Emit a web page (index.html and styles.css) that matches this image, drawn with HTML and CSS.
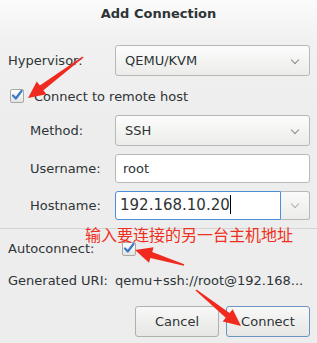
FILE: index.html
```html
<!DOCTYPE html>
<html lang="zh">
<head>
  <meta charset="UTF-8">
  <title>Add Connection</title>
  <link rel="stylesheet" href="styles.css">
</head>
<body>
  <div class="dialog">
    <div class="titlebar">Add Connection</div>
    <div class="content">
      <div class="row">
        <span class="label">Hypervisor:</span>
        <div class="combo">QEMU/KVM<span class="chev"></span></div>
      </div>
      <div class="check-row">
        <span class="check">
          <svg width="14" height="14" viewBox="0 0 14 14"><path d="M3 7.5 L5.8 10.5 L11.5 3" fill="none" stroke="#3a78c8" stroke-width="2.2" stroke-linecap="round" stroke-linejoin="round"/></svg>
        </span>
        <span>Connect to remote host</span>
      </div>
      <div class="row sub row-method">
        <span class="label">Method:</span>
        <div class="combo">SSH<span class="chev"></span></div>
      </div>
      <div class="row sub row-user">
        <span class="label">Username:</span>
        <div class="entry">root</div>
      </div>
      <div class="row sub row-host">
        <span class="label">Hostname:</span>
        <div class="entry-combo">
          <div class="entry focus">192.168.10.20<span class="caret"></span></div>
          <div class="drop"><span class="chev"></span></div>
        </div>
      </div>
      <div class="sep"></div>
      <div class="row row-auto">
        <span class="label">Autoconnect:</span>
        <span class="check">
          <svg width="14" height="14" viewBox="0 0 14 14"><path d="M3 7.5 L5.8 10.5 L11.5 3" fill="none" stroke="#3a78c8" stroke-width="2.2" stroke-linecap="round" stroke-linejoin="round"/></svg>
        </span>
      </div>
      <div class="row row-uri">
        <span class="label">Generated URI:</span>
        <span class="uri">qemu+ssh://root@192.168...</span>
      </div>
      <div class="buttons">
        <button class="btn">Cancel</button>
        <button class="btn default">Connect</button>
      </div>
    </div>

    <div class="note">输入要连接的另一台主机地址</div>
    <svg class="arrows" width="317" height="343" viewBox="0 0 317 343">
      <g fill="#f02a1f">
        <!-- to remote host checkbox -->
        <path d="M83.5 57.6 L43.4 90.2 L46.4 94.2 L28 98 L36.8 81.4 L39.8 85.4 L82.5 56.4 Z"/>
        <!-- to autoconnect checkbox -->
        <path d="M184.2 264.2 L152.2 252.1 L153.6 247.3 L135 250 L149 262.7 L150.4 257.9 L183.8 265.8 Z"/>
        <!-- to connect button -->
        <path d="M195.5 290.6 L225.8 317.7 L222.7 321.6 L241 326 L232.7 309.2 L229.6 313.1 L196.5 289.4 Z"/>
      </g>
    </svg>
  </div>
</body>
</html>
```

FILE: styles.css
```css
body {
  margin: 0;
  padding: 0;
  background: #ededed;
  font-family: 'DejaVu Sans', 'Noto Sans', sans-serif;
  font-size: 13px;
  color: #2e3436;
}
.dialog {
  position: relative;
  width: 317px;
  height: 343px;
  overflow: hidden;
  background: linear-gradient(#fbfbfb 0px, #f1f1f1 40px, #ededed 120px);
}
.titlebar {
  height: 28px;
  line-height: 28px;
  text-align: center;
  font-weight: bold;
  font-size: 13px;
  color: #2e3436;
}
.content {
  padding: 17px 7px 0 8px;
}
.row {
  display: flex;
  align-items: center;
}
.label {
  width: 107px;
  flex-shrink: 0;
}
.row.sub .label {
  padding-left: 22px;
  width: 85px;
}
.combo {
  flex: 1;
  height: 29px;
  line-height: 29px;
  padding-left: 9px;
  border: 1px solid #b8b8b4;
  border-radius: 3px;
  background: linear-gradient(#fcfcfc, #ececea);
  position: relative;
}
.chev {
  position: absolute;
  right: 11px;
  top: 11px;
  width: 5px;
  height: 5px;
  border-right: 1.5px solid #8a8c88;
  border-bottom: 1.5px solid #8a8c88;
  transform: rotate(45deg);
}
.check-row {
  display: flex;
  align-items: center;
  height: 20px;
  margin: 10px 0 9px 2px;
}
.check {
  width: 12px;
  height: 12px;
  border: 1px solid #a8a8a4;
  border-radius: 2px;
  background: linear-gradient(#ffffff, #e4e4e2);
  position: relative;
  margin-right: 10px;
}
.check svg {
  position: absolute;
  left: -1px;
  top: -2px;
}
.entry {
  flex: 1;
  height: 27px;
  line-height: 27px;
  padding-left: 7px;
  border: 1px solid #b8b8b4;
  border-radius: 3px;
  background: #fff;
  box-sizing: content-box;
}
.row-user {
  margin-top: 8px;
}
.row-host {
  margin-top: 8px;
}
.entry-combo {
  flex: 1;
  display: flex;
}
.entry.focus {
  font-size: 15px;
  border-color: #4a90d9;
  border-radius: 3px 0 0 3px;
  padding-left: 4px;
}
.caret {
  display: inline-block;
  width: 1px;
  height: 19px;
  background: #000;
  vertical-align: -4px;
}
.drop {
  width: 28px;
  height: 27px;
  border: 1px solid #b8b8b4;
  border-left: none;
  border-radius: 0 3px 3px 0;
  background: linear-gradient(#fafafa, #ececea);
  position: relative;
}
.drop .chev {
  right: 11px;
  top: 9px;
  border-color: #b0b2ae;
}
.sep {
  height: 1px;
  background: #d4d4d2;
  margin: 8px -7px 0 -8px;
}
.row-auto {
  margin-top: 12px;
}
.row-auto .label {
  width: 114px;
}
.row-uri {
  margin-top: 17px;
}
.uri {
  white-space: nowrap;
}
.buttons {
  display: flex;
  justify-content: flex-end;
  gap: 7px;
  margin-top: 18px;
}
.btn {
  width: 84px;
  height: 31px;
  font-family: inherit;
  font-size: 13px;
  color: #2e3436;
  border: 1px solid #b0b0ac;
  border-radius: 3px;
  background: linear-gradient(#f8f8f8, #e6e6e4);
}
.btn.default {
  border-color: #6b94c2;
}
.note {
  position: absolute;
  left: 85px;
  top: 224px;
  color: #ef3020;
  font-family: 'Noto Sans CJK SC', sans-serif;
  font-size: 16px;
  line-height: 20px;
}
.arrows {
  position: absolute;
  left: 0;
  top: 0;
}
```
